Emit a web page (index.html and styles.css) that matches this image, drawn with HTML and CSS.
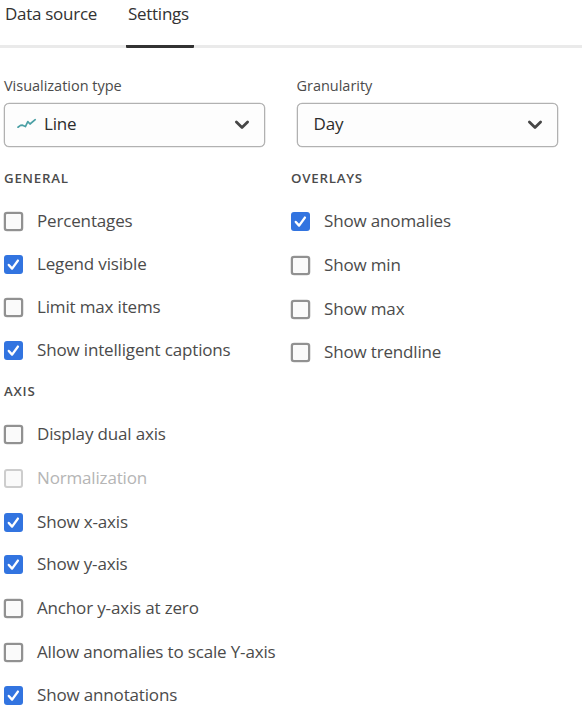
FILE: index.html
```html
<!DOCTYPE html>
<html lang="en">
<head>
<meta charset="utf-8">
<title>Settings</title>
<link rel="stylesheet" href="styles.css">
</head>
<body>
<svg width="0" height="0" class="defs">
  <symbol id="check" viewBox="0 0 19 19"><path d="M4.8 10 8.1 13.6 13.9 5.6"/></symbol>
  <symbol id="chevron" viewBox="0 0 16 10"><path d="M2.4 2 8 7.4 13.6 2"/></symbol>
</svg>
<nav class="tabs">
  <a class="tab">Data source</a>
  <a class="tab selected">Settings</a>
</nav>
<main>
  <div class="fields">
    <div class="field">
      <label>Visualization type</label>
      <div class="picker">
        <svg class="line-icon" viewBox="0 0 20 12"><path d="M1 9.2 3.5 7.4 5.5 7.2 8.4 8.6 10.8 3.6 13 6 18.2 1.7"/></svg>
        <span class="value">Line</span>
        <svg class="chevron"><use href="#chevron"/></svg>
      </div>
    </div>
    <div class="field">
      <label>Granularity</label>
      <div class="picker">
        <span class="value">Day</span>
        <svg class="chevron"><use href="#chevron"/></svg>
      </div>
    </div>
  </div>
  <div class="columns">
    <section>
      <h2>GENERAL</h2>
      <div class="options general">
        <div class="option"><i class="box"></i><span>Percentages</span></div>
        <div class="option"><i class="box on"><svg><use href="#check"/></svg></i><span>Legend visible</span></div>
        <div class="option"><i class="box"></i><span>Limit max items</span></div>
        <div class="option"><i class="box on"><svg><use href="#check"/></svg></i><span>Show intelligent captions</span></div>
      </div>
    </section>
    <section>
      <h2>OVERLAYS</h2>
      <div class="options overlays">
        <div class="option"><i class="box on"><svg><use href="#check"/></svg></i><span>Show anomalies</span></div>
        <div class="option"><i class="box"></i><span>Show min</span></div>
        <div class="option"><i class="box"></i><span>Show max</span></div>
        <div class="option"><i class="box"></i><span>Show trendline</span></div>
      </div>
    </section>
  </div>
  <section>
    <h2>AXIS</h2>
    <div class="options axis">
      <div class="option"><i class="box"></i><span>Display dual axis</span></div>
      <div class="option disabled"><i class="box"></i><span>Normalization</span></div>
      <div class="option"><i class="box on"><svg><use href="#check"/></svg></i><span>Show x-axis</span></div>
      <div class="option"><i class="box on"><svg><use href="#check"/></svg></i><span>Show y-axis</span></div>
      <div class="option"><i class="box"></i><span>Anchor y-axis at zero</span></div>
      <div class="option"><i class="box"></i><span>Allow anomalies to scale Y-axis</span></div>
      <div class="option"><i class="box on"><svg><use href="#check"/></svg></i><span>Show annotations</span></div>
    </div>
  </section>
</main>
</body>
</html>
```
FILE: styles.css
```css
* { box-sizing: border-box; }
body {
  margin: 0;
  background: #fff;
  color: #4b4b4b;
  font: 17px/20px "Open Sans", sans-serif;
  letter-spacing: -.16px;
  white-space: nowrap;
  overflow: hidden;
}
svg { fill: none; display: block; stroke-linecap: round; stroke-linejoin: round; }
.defs { display: none; }
.tabs {
  display: flex;
  gap: 28px;
  width: 582px;
  height: 48px;
  padding-left: 3px;
  border-bottom: 3px solid #eaeaea;
  letter-spacing: -.28px;
}
.tab { height: 48px; padding: 4px 2px 0; color: #323232; width: 95px; }
.tab.selected { width: 68px; border-bottom: 3px solid #323232; border-radius: 1px; }
main { padding: 28px 0 0 4px; }
.fields { display: flex; gap: 31.5px; }
.field { width: 261px; }
.field label { display: block; height: 27px; font-size: 14.5px; letter-spacing: -.02px; }
.picker {
  display: flex;
  align-items: center;
  height: 44px;
  padding: 0 14px 3px 12px;
  border: 1.5px solid #b1b1b1;
  box-shadow: 0 0 0 .3px #b8b8b8;
  border-radius: 5px;
  background: #fdfdfd;
  color: #2c2c2c;
}
.field + .field .picker { padding-left: 16px; }
.line-icon { width: 20px; height: 12px; margin-right: 7px; stroke: #4ba0a5; stroke-width: 1.7; }
.chevron { width: 16px; height: 10px; margin: 2px 0 0 auto; stroke: #464646; stroke-width: 2.8; }
.columns { display: flex; }
.columns section { width: 287px; height: 213px; }
h2 { margin: 0; padding-top: 21px; height: 65px; font-size: 13.3px; line-height: 20px; font-weight: 600; letter-spacing: .75px; }
.options { display: grid; }
.general { grid-template-rows: 43px 43px 43px 19px; }
.overlays { grid-template-rows: 44px 44px 43px 19px; }
.axis { grid-template-rows: 44px 44px 42px 44px 44px 43px 19px; }
.option { display: flex; gap: 14px; height: 19px; line-height: 18px; }
.box { width: 19px; height: 19px; border: 2px solid #919191; box-shadow: 0 0 0 .3px #a5a5a5; border-radius: 3px; background: #fafafa; }
.box.on { border: 0; background: #3274e0; box-shadow: none; }
.box svg { width: 19px; height: 19px; stroke: #fff; stroke-width: 2.4; }
.disabled { color: #b5b5b5; }
.disabled .box { border-color: #cdcdcd; box-shadow: none; }
```
